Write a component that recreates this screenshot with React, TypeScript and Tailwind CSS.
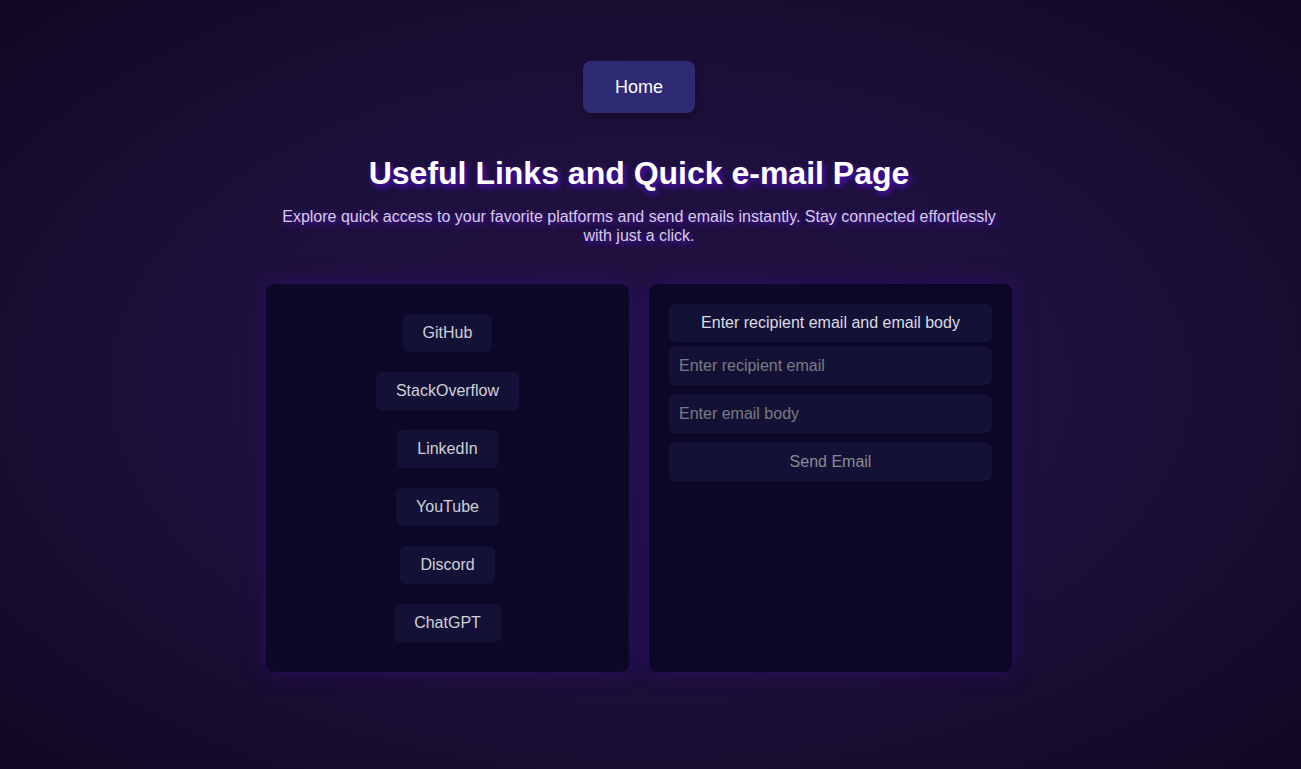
import React from "react";

const LINKS = ["GitHub", "StackOverflow", "LinkedIn", "YouTube", "Discord", "ChatGPT"];

const App = () => {
  return (
    <div className="min-h-screen w-full bg-[radial-gradient(ellipse_at_center,#231241_0%,#1e103d_45%,#120823_100%)] font-['Liberation_Sans',Arial,sans-serif] flex flex-col items-center pt-[61px] pr-[23px]">
      <button className="w-[112px] h-[52px] rounded-lg bg-[#2f2a74] text-white text-lg shadow-[0_4px_10px_rgba(0,0,0,0.3)]">
        Home
      </button>
      <h1 className="mt-[40px] text-[32px] leading-[40px] font-bold text-white [text-shadow:2px_3px_6px_#5311d0]">
        Useful Links and Quick e-mail Page
      </h1>
      <p className="mt-[14px] w-[730px] text-center text-base leading-[19px] text-[#d6cde0] [text-shadow:2px_2px_6px_#5311d0]">
        Explore quick access to your favorite platforms and send emails instantly. Stay connected effortlessly with just a click.
      </p>
      <div className="mt-[39px] flex gap-5">
        <LinksPanel />
        <EmailPanel />
      </div>
    </div>
  );
};

const LinksPanel = () => {
  return (
    <div className="w-[363px] h-[388px] rounded-lg bg-[#0e0828] shadow-[0_0_20px_#2a0e66] flex flex-col items-center pt-[30px] gap-5">
      {LINKS.map((l) => (
        <a
          key={l}
          className="h-[38px] px-5 flex items-center rounded-md bg-[#131236] text-[#d0d0d8] text-base"
        >
          {l}
        </a>
      ))}
    </div>
  );
};

const EmailPanel = () => {
  return (
    <div className="w-[363px] h-[388px] rounded-lg bg-[#0d0727] shadow-[0_0_20px_#2a0e66] flex flex-col p-5">
      <div className="h-[38px] flex items-center justify-center rounded-md bg-[#131236] text-[#dcdce4] text-base">
        Enter recipient email and email body
      </div>
      <input
        className="mt-[5px] h-[38px] px-[10px] rounded-md bg-[#131236] text-base text-[#ccc] placeholder:text-[#7a7a84] outline-none"
        placeholder="Enter recipient email"
      />
      <input
        className="mt-[10px] h-[38px] px-[10px] rounded-md bg-[#131236] text-base text-[#ccc] placeholder:text-[#7a7a84] outline-none"
        placeholder="Enter email body"
      />
      <button className="mt-[10px] h-[38px] rounded-md bg-[#131236] text-base text-[#8a8a94]">
        Send Email
      </button>
    </div>
  );
};

export default App;
